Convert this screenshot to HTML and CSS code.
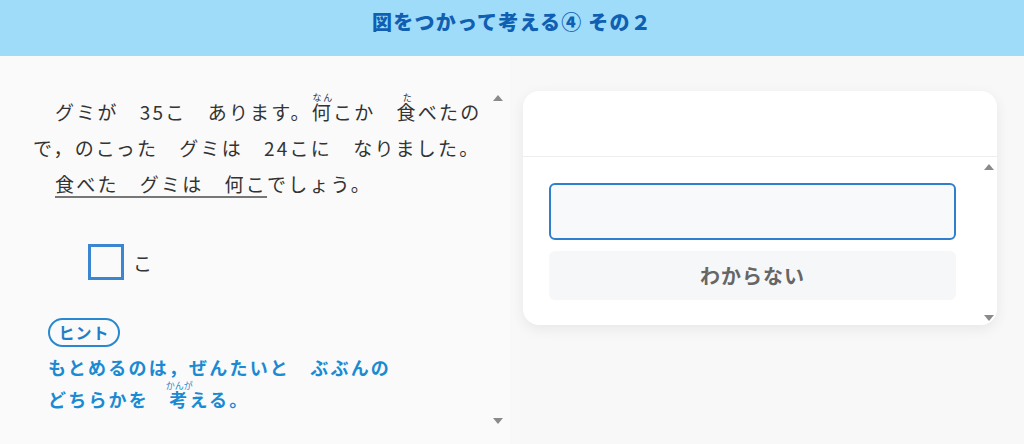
FILE: index.html
```html
<!DOCTYPE html>
<html lang="ja">
<head>
<meta charset="utf-8">
<link rel="stylesheet" href="styles.css">
</head>
<body>
<header class="top">
  <h1 class="title">図をつかって考える④ その２</h1>
</header>
<main class="main">
  <section class="left">
    <div class="left-content">
      <p class="q">グミが　35こ　あります。<ruby>何<rt>なん</rt></ruby>こか　<ruby>食<rt>た</rt></ruby>べたので，のこった　グミは　24こに　なりました。</p>
      <p class="q"><span class="ul">食べた　グミは　何こ</span>でしょう。</p>
      <div class="answer-row">
        <span class="box"></span><span class="unit">こ</span>
      </div>
      <div class="hint">
        <span class="pill">ヒント</span>
        <p class="hint-text">もとめるのは，ぜんたいと　ぶぶんの<br>どちらかを　<ruby>考<rt>かんが</rt></ruby>える。</p>
      </div>
    </div>
    <div class="scroll scroll-left">
      <span class="arrow up"></span>
      <span class="arrow down"></span>
    </div>
  </section>
  <section class="right">
    <div class="card">
      <div class="card-head"></div>
      <div class="card-body">
        <div class="card-inner">
          <div class="input"></div>
          <button class="btn">わからない</button>
        </div>
        <div class="scroll scroll-card">
          <span class="arrow up"></span>
          <span class="arrow down"></span>
        </div>
      </div>
    </div>
  </section>
</main>
</body>
</html>
```
FILE: styles.css
```css
* { box-sizing: border-box; }
html, body { margin: 0; padding: 0; }
body {
  width: 1024px;
  height: 444px;
  overflow: hidden;
  font-family: "Noto Sans CJK JP", "Noto Sans", sans-serif;
  background: #f8f8f8;
  color: #333;
}
.top {
  height: 56px;
  background: #9fdcfa;
  padding-top: 8px;
}
.title {
  margin: 0;
  text-align: center;
  font-size: 20px;
  line-height: 28px;
  font-weight: 900;
  color: #0f5fb2;
  letter-spacing: 1.2px;
}
.main {
  display: flex;
  height: 388px;
}
.left {
  width: 510px;
  background: #fafafa;
  display: flex;
}
.left-content {
  flex: 1;
  padding: 37px 0 0 33px;
}
.q {
  margin: 0;
  font-size: 19px;
  line-height: 36px;
  letter-spacing: 2.2px;
  text-indent: 22px;
  color: #333;
}
.q ruby rt {
  font-size: 9px;
  letter-spacing: 0;
  text-indent: 0;
}
.ul {
  text-decoration: underline;
  text-decoration-color: #777;
  text-decoration-thickness: 2px;
  text-underline-offset: 4px;
}
.answer-row {
  display: flex;
  align-items: center;
  gap: 9px;
  margin: 42px 0 0 55px;
}
.box {
  width: 36px;
  height: 36px;
  border: 3px solid #3a86d0;
}
.unit {
  font-size: 19px;
  color: #333;
}
.hint {
  margin: 38px 0 0 15px;
}
.pill {
  display: inline-block;
  width: 72px;
  height: 29px;
  border: 2px solid #2a88cf;
  border-radius: 15px;
  text-align: center;
  font-size: 16px;
  line-height: 25px;
  font-weight: 700;
  color: #1e7fc8;
  letter-spacing: 1px;
}
.hint-text {
  margin: 4px 0 0;
  font-size: 18px;
  line-height: 32px;
  font-weight: 700;
  letter-spacing: 2.2px;
  color: #1a8ad2;
}
.hint-text rt {
  font-size: 9px;
  letter-spacing: 0;
  font-weight: 400;
}
.scroll {
  width: 14px;
  display: flex;
  flex-direction: column;
  justify-content: space-between;
  align-items: center;
}
.scroll-left {
  padding: 39px 0 20px;
  margin-right: 5px;
}
.arrow {
  width: 0;
  height: 0;
  border-left: 5px solid transparent;
  border-right: 5px solid transparent;
}
.arrow.up { border-bottom: 6px solid #8a8a8a; }
.arrow.down { border-top: 6px solid #8a8a8a; }
.right {
  flex: 1;
  padding: 35px 27px 0 13px;
}
.card {
  background: #fff;
  border-radius: 16px;
  box-shadow: 0 4px 14px rgba(0, 0, 0, 0.07);
  height: 234px;
  display: flex;
  flex-direction: column;
}
.card-head {
  height: 66px;
  border-bottom: 1px solid #eeeeee;
}
.card-body {
  flex: 1;
  display: flex;
}
.card-inner {
  flex: 1;
  padding: 26px 26px 0 26px;
  display: flex;
  flex-direction: column;
  gap: 11px;
}
.input {
  height: 57px;
  border: 2px solid #2f7fcd;
  border-radius: 6px;
  background: #f8f9fa;
}
.btn {
  height: 49px;
  border: none;
  border-radius: 6px;
  background: #f6f7f8;
  font-family: "Noto Sans CJK JP", "Noto Sans", sans-serif;
  font-size: 20px;
  font-weight: 700;
  color: #666;
  letter-spacing: 1px;
  padding: 0;
}
.scroll-card {
  padding: 7px 0 4px;
  margin-right: 1px;
}
```
